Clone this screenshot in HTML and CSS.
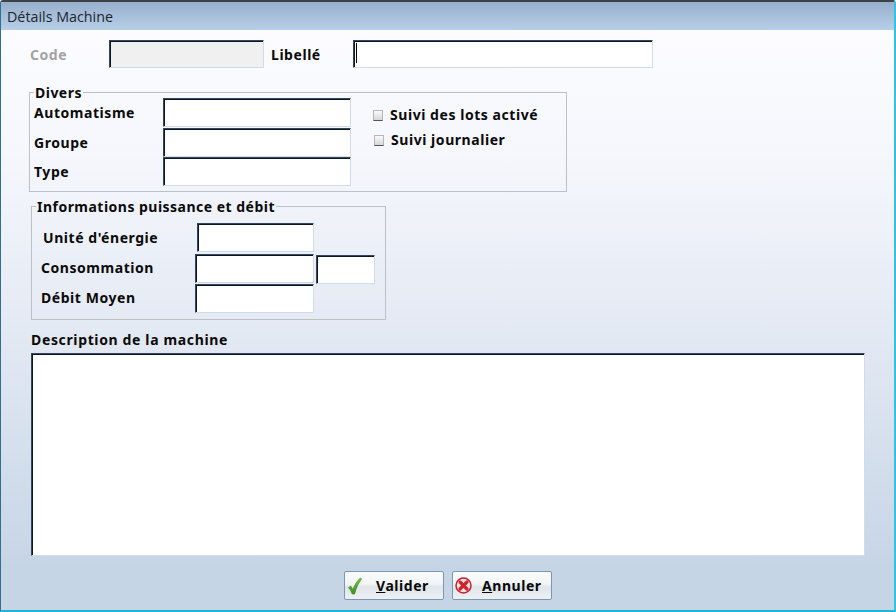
FILE: index.html
```html
<!DOCTYPE html>
<html lang="fr">
<head>
<meta charset="utf-8">
<title>Détails Machine</title>
<link rel="stylesheet" href="styles.css">
</head>
<body>
<div class="window">
  <header class="titlebar">Détails Machine</header>
  <main class="content">
    <div class="top-row">
      <label class="lbl lbl-code">Code</label>
      <div class="field field-code disabled"></div>
      <label class="lbl lbl-libelle">Libellé</label>
      <div class="field field-libelle"><span class="caret"></span></div>
    </div>

    <fieldset class="group group-divers">
      <legend>Divers</legend>
      <div class="divers-grid">
        <div class="divers-fields">
          <div class="drow"><label class="lbl dlabel">Automatisme</label><div class="field dfield"></div></div>
          <div class="drow"><label class="lbl dlabel">Groupe</label><div class="field dfield"></div></div>
          <div class="drow"><label class="lbl dlabel">Type</label><div class="field dfield"></div></div>
        </div>
        <div class="checks">
          <div class="check"><span class="box"></span><span class="lbl">Suivi des lots activé</span></div>
          <div class="check check-2"><span class="box"></span><span class="lbl">Suivi journalier</span></div>
        </div>
      </div>
    </fieldset>

    <fieldset class="group group-info">
      <legend>Informations puissance et débit</legend>
      <div class="irow irow-1"><label class="lbl ilabel-1">Unité d'énergie</label><div class="field ifield-1"></div></div>
      <div class="irow irow-2"><label class="lbl ilabel-2">Consommation</label><div class="field ifield-2"></div><div class="field ifield-small"></div></div>
      <div class="irow irow-3"><label class="lbl ilabel-2">Débit Moyen</label><div class="field ifield-2"></div></div>
    </fieldset>

    <label class="lbl desc-label">Description de la machine</label>
    <div class="field desc"></div>

    <div class="actions">
      <button class="btn" type="button">
        <svg class="ico ico-ok" width="16" height="18" viewBox="0 0 16 18"><defs><linearGradient id="ok" x1="0" y1="0" x2="0" y2="1"><stop offset="0" stop-color="#74b84a"/><stop offset="1" stop-color="#3f8f22"/></linearGradient></defs><path d="M1 10.500 C2 9.500 3 9 4 8.700 L5.800 11.800 C7.500 7.500 9.800 4 13 .8 C13.800 .8 14.600 1.300 15 2 C12 6 9.500 11 8 17 C7 17.500 5.500 17.500 4.800 17 C4 14.500 2.800 12.500 1 10.500 Z" fill="url(#ok)"/></svg>
        <span class="btn-text"><u>V</u>alider</span>
      </button>
      <button class="btn btn-cancel" type="button">
        <svg class="ico ico-no" width="17" height="17" viewBox="0 0 17 17"><circle cx="8.500" cy="8.500" r="7.500" fill="#f7e3e3" stroke="#c5222b" stroke-width="1.500"/><path d="M5 5 L12 12 M12 5 L5 12" stroke="#d3242d" stroke-width="3.200" stroke-linecap="round"/></svg>
        <span class="btn-text"><u>A</u>nnuler</span>
      </button>
    </div>
  </main>
</div>
</body>
</html>
```
FILE: styles.css
```css
* { box-sizing: border-box; }
html, body { margin: 0; padding: 0; }
body { width: 896px; height: 612px; overflow: hidden; background: #fff; }

.window {
  width: 896px;
  height: 612px;
  display: flex;
  flex-direction: column;
  border-top: 2px solid #3d4347;
  border-left: 1px solid #2f6f90;
  border-right: 2px solid #35bfe0;
  border-bottom: 2px solid #22b4d6;
  border-top-left-radius: 3px;
  border-top-right-radius: 3px;
  background: linear-gradient(#fdfdff 0%, #f5f7fc 25%, #e3e9f3 55%, #c6d5e6 93%, #c6d5e6 100%);
  font-family: "Noto Sans", sans-serif;
  color: #0a0a0a;
}
.titlebar {
  height: 28px;
  flex: none;
  padding: 6px 0 0 6px;
  background: linear-gradient(#97afcb, #b8cfe8);
  font-family: "Open Sans", sans-serif;
  font-size: 14.300px;
  line-height: 18px;
  color: #1c2630;
}
.content { flex: 1; position: relative; display: flex; flex-direction: column; padding: 10px 0 0 1px; }

.lbl { font-size: 14px; font-weight: 700; line-height: 16px; white-space: nowrap; letter-spacing: .55px; }

.field {
  background: #fff;
  border-style: solid;
  border-width: 1px;
  border-color: #34475e #d2dce7 #d2dce7 #34475e;
  box-shadow: inset 1px 1px 0 #0c1723;
  flex: none;
}

.top-row { display: flex; align-items: center; height: 28px; }
.lbl-code { color: #a3a3a3; margin-left: 28px; width: 79px; padding-top: 2px; }
.field-code { width: 155px; height: 28px; }
.disabled { background: #f0f0f0; }
.lbl-libelle { margin-left: 7px; width: 82px; padding-top: 2px; }
.field-libelle { width: 300px; height: 28px; padding: 2px 0 0 2px; }
.caret { display: block; width: 1px; height: 20px; background: #000; }

.group {
  border: 1px solid #bdc0c4;
  margin: 0;
  padding: 0;
  min-width: 0;
}
.group legend { font-size: 14px; font-weight: 700; line-height: 15px; padding: 0 1px; letter-spacing: .48px; }

.group-divers { width: 538px; height: 107px; margin: 17px 0 0 27px; padding: 0 0 0 4px; }
.group-divers legend { margin-left: 0; }
.divers-grid { display: flex; }
.divers-fields { display: flex; flex-direction: column; margin-top: -2px; }
.drow { display: flex; height: 29.500px; align-items: flex-start; }
.dlabel { width: 129px; padding-top: 7px; }
.dfield { width: 188px; height: 29px; }
.checks { margin: 7px 0 0 22px; }
.check { display: flex; align-items: center; gap: 7px; height: 16px; }
.check-2 { margin: 9px 0 0 1px; }
.box {
  width: 10px;
  height: 11px;
  border: 1px solid #b4b8bc;
  border-bottom-color: #555;
  background: linear-gradient(#fafafa, #d6d6d6);
}

.group-info { width: 355px; height: 121px; margin: 7px 0 0 29px; padding: 0; position: relative; }
.group-info legend { margin-left: 4px; }
.irow { display: flex; align-items: flex-start; }
.irow-1 { margin-top: 9px; height: 31px; }
.irow-2 { height: 30px; }
.irow-3 { height: 29px; }
.ilabel-1 { margin-left: 11px; width: 154px; padding-top: 7px; }
.ilabel-2 { margin-left: 9px; width: 154px; padding-top: 6px; }
.ifield-1 { width: 117px; height: 29px; }
.ifield-2 { width: 119px; height: 29px; }
.ifield-small { width: 59px; height: 29px; margin: 1px 0 0 2px; }

.desc-label { margin: 12px 0 0 29px; letter-spacing: .64px; }
.desc { width: 834px; height: 203px; margin: 5px 0 0 29px; }

.actions { display: flex; gap: 8px; margin: 15px 0 0 342px; }
.btn {
  width: 100px;
  height: 29px;
  padding: 0;
  display: flex;
  align-items: center;
  border: 1px solid #7d98ae;
  border-radius: 2px;
  background: linear-gradient(#fafbfc 0%, #f2f4f6 45%, #dfe5ea 55%, #eef1f4 100%);
  font-family: "Noto Sans", sans-serif;
  color: #0a0a0a;
}
.ico { flex: none; margin-left: 2px; }
.btn-text { font-size: 14px; font-weight: 700; letter-spacing: .55px; margin-left: 13px; }
.btn-cancel .btn-text { margin-left: 10px; }
```
